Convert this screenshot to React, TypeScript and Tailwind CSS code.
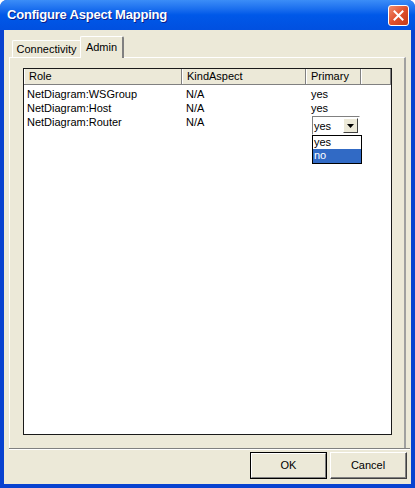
const font = { fontFamily: '"Liberation Sans", Arial, sans-serif' };

const rows = [
  { role: "NetDiagram:WSGroup", kind: "N/A", primary: "yes" },
  { role: "NetDiagram:Host", kind: "N/A", primary: "yes" },
  { role: "NetDiagram:Router", kind: "N/A", primary: "" },
];

const HeaderCell = ({ label, width }: { label: string; width: string }) => (
  <div
    className={`${width} h-full shrink-0 border-r border-r-[#808080] border-l border-l-white pl-[4px] text-[11px] leading-[15px] text-black`}
  >
    {label}
  </div>
);

const App = () => {
  return (
    <div
      className="flex h-[488px] w-[415px] flex-col overflow-hidden rounded-t-[7px] bg-[#0842D0]"
      style={font}
    >
      {/* title bar */}
      <div className="flex h-[30px] shrink-0 items-center justify-between bg-gradient-to-b from-[#3B8DF7] via-[#0058E8] to-[#0150E0] pl-[7px] pr-[6px]">
        <span className="text-[13px] font-bold tracking-[-0.2px] text-white [text-shadow:1px_1px_0_#0A1E8A]">
          Configure Aspect Mapping
        </span>
        <div className="flex h-[21px] w-[21px] items-center justify-center rounded-[3px] border border-white bg-gradient-to-br from-[#F08C6C] via-[#E0502C] to-[#C43A16]">
          <svg width="11" height="11" viewBox="0 0 11 11">
            <path d="M1.5 1.5 L9.5 9.5 M9.5 1.5 L1.5 9.5" stroke="white" strokeWidth="2" strokeLinecap="square" />
          </svg>
        </div>
      </div>

      {/* body */}
      <div className="mx-[4px] mb-[4px] flex flex-1 flex-col bg-[#ECE9D8]">
        {/* tabs */}
        <div className="ml-[8px] mt-[6px] flex h-[21px] items-end">
          <div className="flex h-[17px] w-[68px] items-center justify-center rounded-tl-[2px] border-l border-t border-white bg-[#ECE9D8] text-[11px] text-black">
            Connectivity
          </div>
          <div className="relative z-10 -mb-[1px] flex h-[22px] w-[44px] items-start justify-center rounded-t-[2px] border-l border-t border-r-2 border-white border-r-[#808080] bg-[#ECE9D8] pt-[2px] text-[11px] text-black">
            Admin
          </div>
        </div>

        {/* panel */}
        <div className="ml-[5px] flex h-[391px] w-[397px] flex-col border-l border-t border-white border-r-2 border-r-[#A0A0A0] pl-[13px] pt-[10px]">
          <div className="relative flex h-[367px] w-[369px] flex-col border border-[#1A1A1A] bg-white">
            {/* header */}
            <div className="flex h-[16px] shrink-0 border-b border-[#808080] bg-[#ECE9D8]">
              <HeaderCell label="Role" width="w-[158px]" />
              <HeaderCell label="KindAspect" width="w-[124px]" />
              <HeaderCell label="Primary" width="w-[55px]" />
              <HeaderCell label="" width="w-[30px]" />
            </div>
            <div className="flex flex-col pt-[2px]">
              {rows.map((r) => (
                <div key={r.role} className="flex h-[14px] text-[11px] leading-[14px] text-black">
                  <div className="w-[158px] shrink-0 pl-[3px]">{r.role}</div>
                  <div className="w-[124px] shrink-0 pl-[4px]">{r.kind}</div>
                  <div className="w-[55px] shrink-0 pl-[5px]">{r.primary}</div>
                </div>
              ))}
            </div>

            {/* combo editor */}
            <div className="absolute left-[288px] top-[47px] flex h-[19px] w-[48px] items-center border border-l-[#808080] border-t-[#808080] border-r-white border-b-white bg-white">
              <span className="flex-1 pl-[1px] text-[11px] leading-[14px] text-black">yes</span>
              <div className="mr-[1px] flex h-[15px] w-[15px] items-center justify-center border border-l-white border-t-white border-r-[#404040] border-b-[#404040] bg-[#ECE9D8]">
                <svg width="7" height="4" viewBox="0 0 7 4">
                  <path d="M0 0 H7 L3.5 4 Z" fill="black" />
                </svg>
              </div>
            </div>
            <div className="absolute left-[288px] top-[66px] flex w-[50px] flex-col border border-black bg-white text-[11px] leading-[13px]">
              <div className="h-[13px] pl-[1px] text-black">yes</div>
              <div className="h-[14px] bg-[#316AC5] pl-[1px] text-white">no</div>
            </div>
          </div>
        </div>
        <div className="ml-[5px] mr-[1px] h-[1px] bg-[#808080]" />
        <div className="ml-[5px] mr-[1px] h-[1px] bg-white" />

        {/* buttons */}
        <div className="mr-[4px] mt-[2px] flex justify-end gap-[3px]">
          <button className="h-[27px] w-[77px] border border-black bg-[#ECE9D8] text-[11px] text-black">
            <div className="flex h-full w-full items-center justify-center border border-l-white border-t-white border-r-[#808080] border-b-[#808080]">
              OK
            </div>
          </button>
          <button className="h-[27px] w-[77px] border border-l-white border-t-white border-r-[#404040] border-b-[#404040] bg-[#ECE9D8] text-[11px] text-black">
            <div className="flex h-full w-full items-center justify-center border-b border-r border-[#808080]">
              Cancel
            </div>
          </button>
        </div>
      </div>
    </div>
  );
};

export default App;
